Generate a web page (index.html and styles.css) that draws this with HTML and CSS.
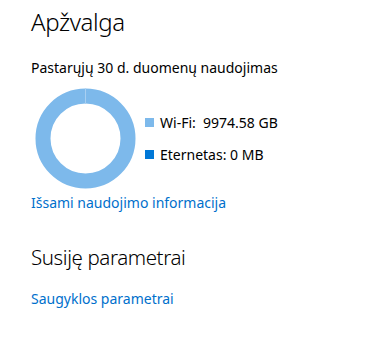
FILE: index.html
```html
<!DOCTYPE html>
<html lang="lt">
<head>
<meta charset="utf-8">
<link rel="stylesheet" href="styles.css">
</head>
<body>
<main class="page">
  <h1 class="title">Apžvalga</h1>
  <p class="subtitle">Pastarųjų 30 d. duomenų naudojimas</p>
  <div class="usage">
    <svg class="donut" width="101" height="101" viewBox="0 0 101 101">
      <circle cx="50.5" cy="50.5" r="42.5" fill="none" stroke="#7db9eb" stroke-width="15"/>
      <line x1="50.5" y1="0.5" x2="50.5" y2="16" stroke="#a8cff1" stroke-width="1"/>
    </svg>
    <ul class="legend">
      <li class="legend-item"><span class="swatch swatch-wifi"></span>Wi-Fi:&nbsp; 9974.58 GB</li>
      <li class="legend-item"><span class="swatch swatch-eth"></span>Eternetas: 0 MB</li>
    </ul>
  </div>
  <a class="link link-detail" href="#">Išsami naudojimo informacija</a>
  <h2 class="section-title">Susiję parametrai</h2>
  <a class="link" href="#">Saugyklos parametrai</a>
</main>
</body>
</html>
```

FILE: styles.css
```css
html, body {
  margin: 0;
  padding: 0;
  background: #ffffff;
}
body {
  font-family: "Noto Sans", "Open Sans", sans-serif;
  color: #000;
}
.page {
  display: flex;
  flex-direction: column;
  align-items: flex-start;
  padding: 6px 0 0 31px;
}
.title {
  margin: 0;
  font-size: 24px;
  font-weight: 300;
  line-height: 32px;
  letter-spacing: -0.4px;
}
.subtitle {
  margin: 20px 0 0;
  font-size: 14px;
  line-height: 20px;
}
.usage {
  display: flex;
  align-items: flex-start;
  margin-top: 10px;
}
.donut {
  display: block;
  margin-left: 4px;
}
.legend {
  list-style: none;
  margin: 25px 0 0 9px;
  padding: 0;
  display: flex;
  flex-direction: column;
  gap: 12px;
}
.legend-item {
  display: flex;
  align-items: center;
  font-size: 14px;
  line-height: 20px;
}
.swatch {
  width: 9px;
  height: 9px;
  margin: -1px 6px 0 0;
}
.swatch-wifi { background: #7db9eb; }
.swatch-eth { background: #0078d7; }
.link {
  color: #0070cc;
  text-decoration: none;
  font-size: 14px;
  line-height: 20px;
}
.link-detail {
  margin-top: 4px;
}
.section-title {
  margin: 30px 0 0;
  font-size: 20.5px;
  font-weight: 300;
  line-height: 28px;
  letter-spacing: -0.4px;
}
.section-title + .link {
  margin-top: 18px;
}
```
